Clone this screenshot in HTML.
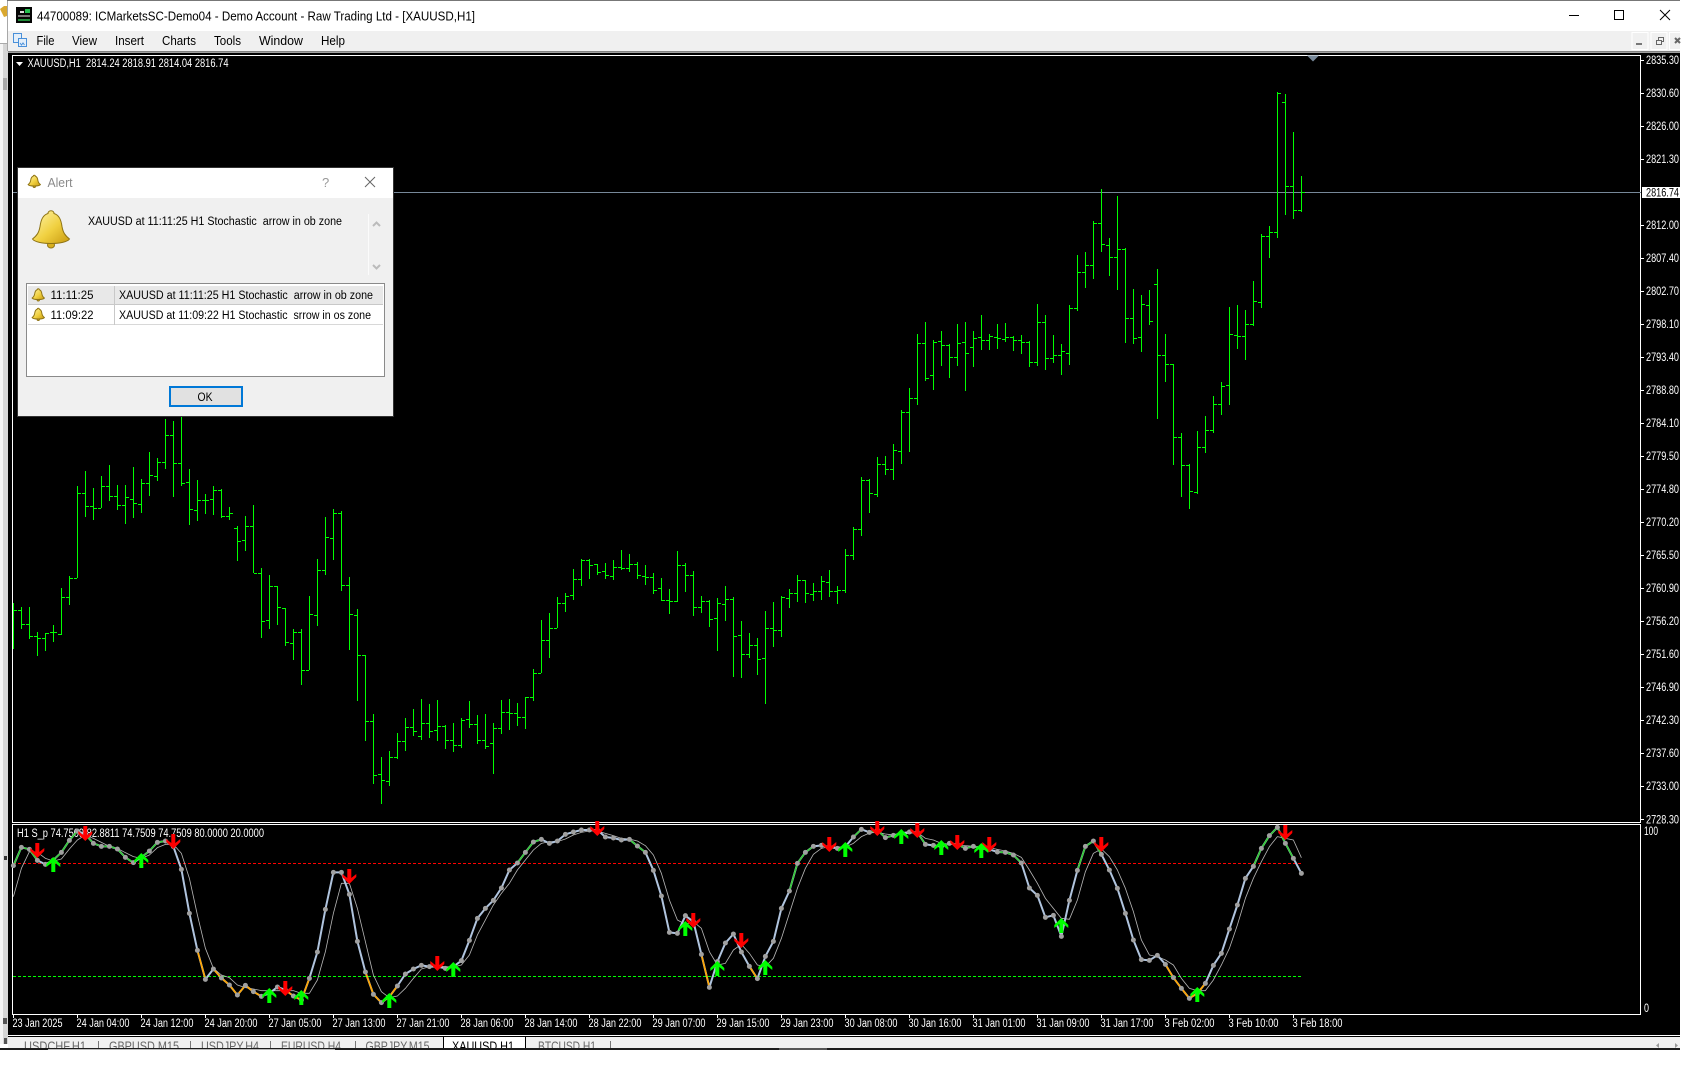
<!DOCTYPE html>
<html><head><meta charset="utf-8"><title>MT4</title>
<style>
html,body{margin:0;padding:0;background:#fff;width:1696px;height:1066px;overflow:hidden}
svg{display:block}
text{font-family:"Liberation Sans",sans-serif;white-space:pre}
.w{fill:#fff;font-size:11.5px}
.k{fill:#000;font-size:12.5px}
.t{fill:#666;font-size:12.5px}
.d{fill:#000;font-size:11.5px}
</style></head><body>
<svg xmlns="http://www.w3.org/2000/svg" width="1696" height="1066" viewBox="0 0 1696 1066">
<defs>
<linearGradient id="gb" x1="0" y1="0" x2="1" y2="1"><stop offset="0" stop-color="#fff6b0"/><stop offset=".55" stop-color="#f0d040"/><stop offset="1" stop-color="#c89a10"/></linearGradient>
<g id="bell"><ellipse cx="19" cy="35" rx="3.5" ry="3" fill="#d8b020" stroke="#8f7414"/><path d="M19 .7c2 0 3 1.3 3 2.8c5 1.5 7 6 8 13c1 6 3 9 7.5 12.5c-2 3-10 4.500-18.500 4.500s-16.500-1.500-18.500-4.500c4.500-3.500 6.500-6.500 7.500-12.500c1-7 3-11.500 8-13c0-1.500 1-2.800 3-2.800z" fill="url(#gb)" stroke="#8f7414"/></g>
<path id="ad" d="M0 0L-7-7V-10L-2-6V-15H2V-6L7-10V-7Z" fill="#f00"/>
<path id="au" d="M0 0L-7 7V10L-2 6V15H2V6L7 10V7Z" fill="#0f0"/>
<marker id="m" markerUnits="userSpaceOnUse" markerWidth="16" markerHeight="16" refX="8" refY="8"><circle cx="8" cy="8" r="7.500" fill="#a0a0a0"/></marker>
<polyline id="mainl" fill="none" points="0,122 24,67 48,73 72,106 96,118 120,105 144,82 168,46 192,18 216,28 240,55 264,64 288,64 312,72 336,97 360,113 384,97 408,78 432,52 456,48 480,65 504,133 528,265 552,376 576,463 600,432 624,459 648,480 672,510 696,481 720,500 744,514 768,505 792,486 816,495 840,513 864,525 888,460 912,381 936,253 960,142 984,142 1008,208 1032,349 1056,441 1080,508 1104,533 1128,515 1152,483 1176,447 1200,432 1224,421 1248,425 1272,425 1296,430 1320,425 1344,407 1368,346 1392,280 1416,250 1440,226 1464,189 1488,135 1512,114 1536,82 1560,51 1584,43 1608,55 1632,48 1656,28 1680,21 1704,15 1728,15 1752,15 1776,36 1800,39 1824,45 1848,43 1872,63 1896,82 1920,136 1944,213 1968,322 1992,325 2016,272 2040,290 2064,388 2088,487 2112,410 2136,354 2160,327 2184,381 2208,424 2232,461 2256,394 2280,349 2304,250 2328,198 2352,115 2376,82 2400,64 2424,61 2448,66 2472,70 2496,65 2520,36 2544,13 2568,22 2592,15 2616,38 2640,31 2664,25 2688,21 2712,22 2736,58 2760,61 2784,65 2808,55 2832,58 2856,70 2880,64 2904,70 2928,73 2952,81 2976,82 3000,90 3024,114 3048,189 3072,211 3096,277 3120,271 3144,334 3168,226 3192,136 3216,64 3240,48 3264,88 3288,135 3312,190 3336,265 3360,345 3384,404 3408,406 3432,391 3456,418 3480,458 3504,490 3528,520 3552,505 3576,475 3600,421 3624,385 3648,312 3672,240 3696,160 3720,124 3744,70 3768,32 3792,7 3816,55 3840,100 3864,145"/>
</defs>

<!-- window frame -->
<rect x="0" y="0" width="1696" height="1066" fill="#fff"/>
<rect x="7" y="0" width="1673" height="1" fill="#777"/>
<rect x="0" y="43" width="7" height="1" fill="#aaa"/>
<rect x="0" y="44" width="3" height="1000" fill="#f4f4f4"/>
<rect x="3" y="44" width="5" height="1000" fill="#d6d6d6"/>
<rect x="3" y="78" width="4" height="12" fill="#aaa"/>
<rect x="4" y="856" width="3" height="4" fill="#333"/>
<rect x="3" y="1018" width="4" height="6" fill="#555"/>
<rect x="4" y="1038" width="3" height="6" fill="#555"/>
<rect x="7" y="1" width="1" height="50" fill="#a8a8a8"/>
<rect x="8" y="31" width="1672" height="20" fill="#f0f0f0"/>
<rect x="8" y="51" width="1672" height="1" fill="#808080"/>
<rect x="8" y="52" width="1672" height="1" fill="#a0a0a0"/>
<path d="M0 9l4-3 3 0v10l-3 1z" fill="#d9a830"/>

<!-- logo + title -->
<rect x="16" y="7" width="16" height="16" fill="#050505"/>
<rect x="25" y="9" width="5" height="4" fill="#25c050"/>
<rect x="20" y="11" width="4" height="2" fill="#ddd"/>
<rect x="18" y="15" width="12" height="2" fill="#777"/>
<rect x="18" y="19" width="12" height="2" fill="#1f8a38"/>
<text class="k" x="37" y="20.500" textLength="438" lengthAdjust="spacingAndGlyphs">44700089: ICMarketsSC-Demo04 - Demo Account - Raw Trading Ltd - [XAUUSD,H1]</text>
<path d="M1569 15.500h10" stroke="#000" fill="none"/>
<rect x="1614.500" y="10.500" width="9" height="9" fill="none" stroke="#000"/>
<path d="M1660 10l10 10M1670 10l-10 10" stroke="#000" fill="none" stroke-width="1"/>

<!-- menu -->
<g fill="none" stroke="#4a90d9"><rect x="13.500" y="33.500" width="8" height="9" fill="#e4effa"/><rect x="18.500" y="38.500" width="8" height="8" fill="#e4effa"/><path d="M20 43l1.500 2 1.500-2 1.500 2"/></g>
<g class="menu">
<text class="k" x="36.500" y="45" textLength="18" lengthAdjust="spacingAndGlyphs">File</text>
<text class="k" x="72" y="45" textLength="25" lengthAdjust="spacingAndGlyphs">View</text>
<text class="k" x="115" y="45" textLength="29" lengthAdjust="spacingAndGlyphs">Insert</text>
<text class="k" x="162" y="45" textLength="34" lengthAdjust="spacingAndGlyphs">Charts</text>
<text class="k" x="214" y="45" textLength="27" lengthAdjust="spacingAndGlyphs">Tools</text>
<text class="k" x="259" y="45" textLength="44" lengthAdjust="spacingAndGlyphs">Window</text>
<text class="k" x="321" y="45" textLength="24" lengthAdjust="spacingAndGlyphs">Help</text>
</g>
<g fill="none" stroke="#fff"><rect x="1632" y="32.500" width="16" height="17"/><rect x="1651" y="32.500" width="16" height="17"/><rect x="1669.500" y="32.500" width="11" height="17"/></g>
<rect x="1636" y="43" width="6" height="2" fill="#777"/>
<path d="M1656.500 40.500h5v4h-5zM1658.500 40v-2.500h5v4h-2" fill="none" stroke="#666"/>
<path d="M1675 38l5 5M1680 38l-5 5" stroke="#666" stroke-width="2" fill="none"/>

<!-- chart background -->
<rect x="8" y="53" width="1672" height="982" fill="#000"/>
<rect x="12" y="55" width="1629" height="1" fill="#fff"/>
<rect x="12" y="55" width="1" height="768" fill="#fff"/>
<rect x="1640" y="55" width="1" height="768" fill="#fff"/>
<rect x="12" y="822" width="1629" height="1" fill="#fff"/>
<rect x="12" y="824" width="1629" height="1" fill="#fff"/>
<rect x="12" y="824" width="1" height="191" fill="#fff"/>
<rect x="1640" y="824" width="1" height="191" fill="#fff"/>
<rect x="12" y="1014" width="1629" height="1" fill="#fff"/>
<path d="M1307 55.500h12l-6 6z" fill="#778899"/>
<path d="M16 62h7l-3.500 4z" fill="#fff"/>
<text class="w" x="27.500" y="67" textLength="201" lengthAdjust="spacingAndGlyphs">XAUUSD,H1  2814.24 2818.91 2814.04 2816.74</text>

<!-- price line -->
<rect x="13" y="192" width="1628" height="1" fill="#778899"/>

<!-- price bars -->
<path fill="none" stroke="#0f0" stroke-width="1" shape-rendering="crispEdges" d="M13.500 603V649M14 610.500h3M21.500 607V629M18 610.500h3M22 624.500h3M29.500 607V639M26 624.500h3M30 636.500h3M37.500 632V656M34 636.500h3M38 638.500h3M45.500 633V651M42 638.500h3M46 633.500h3M53.500 625V642M50 632.500h3M54 632.500h3M61.500 588V635M58 634.500h3M62 597.500h3M69.500 576V605M66 597.500h3M70 578.500h3M77.500 486V578M74 578.500h3M78 493.500h3M85.500 471V517M82 493.500h3M86 506.500h3M93.500 488V520M90 506.500h3M94 508.500h3M101.500 476V508M98 508.500h3M102 486.500h3M109.500 465V501M106 486.500h3M110 496.500h3M117.500 485V510M114 496.500h3M118 505.500h3M125.500 485V524M122 505.500h3M126 497.500h3M133.500 467V518M130 499.500h3M134 503.500h3M141.500 479V513M138 504.500h3M142 483.500h3M149.500 452V496M146 483.500h3M150 475.500h3M157.500 458V481M154 476.500h3M158 462.500h3M165.500 419V469M162 462.500h3M166 435.500h3M173.500 421V497M170 435.500h3M174 463.500h3M181.500 416V486M178 463.500h3M182 483.500h3M189.500 469V525M186 482.500h3M190 509.500h3M197.500 480V521M194 510.500h3M198 500.500h3M205.500 494V514M202 500.500h3M206 500.500h3M213.500 486V515M210 499.500h3M214 490.500h3M221.500 489V518M218 490.500h3M222 516.500h3M229.500 507V520M226 516.500h3M230 513.500h3M237.500 526V561M234 528.500h3M238 541.500h3M245.500 516V551M242 540.500h3M246 526.500h3M253.500 505V573M250 526.500h3M254 573.500h3M261.500 568V638M258 573.500h3M262 621.500h3M269.500 575V629M266 620.500h3M270 586.500h3M277.500 586V625M274 586.500h3M278 607.500h3M285.500 608V646M282 608.500h3M286 642.500h3M293.500 629V660M290 643.500h3M294 632.500h3M301.500 629V685M298 632.500h3M302 670.500h3M309.500 596V670M306 670.500h3M310 614.500h3M317.500 559V626M314 615.500h3M318 570.500h3M325.500 517V575M322 570.500h3M326 537.500h3M333.500 509V560M330 538.500h3M334 513.500h3M341.500 511V591M338 513.500h3M342 585.500h3M349.500 577V650M346 585.500h3M350 614.500h3M357.500 609V701M354 615.500h3M358 655.500h3M365.500 655V741M362 655.500h3M366 721.500h3M373.500 714V784M370 721.500h3M374 775.500h3M381.500 757V804M378 774.500h3M382 780.500h3M389.500 751V786M386 781.500h3M390 757.500h3M397.500 733V759M394 757.500h3M398 741.500h3M405.500 718V751M402 741.500h3M406 727.500h3M413.500 709V736M410 727.500h3M414 731.500h3M421.500 699V740M418 736.500h3M422 723.500h3M429.500 704V738M426 723.500h3M430 731.500h3M437.500 700V741M434 730.500h3M438 726.500h3M445.500 725V749M442 726.500h3M446 740.500h3M453.500 723V752M450 740.500h3M454 745.500h3M461.500 718V748M458 745.500h3M462 720.500h3M469.500 701V728M466 719.500h3M470 724.500h3M477.500 715V744M474 724.500h3M478 740.500h3M485.500 714V749M482 740.500h3M486 746.500h3M493.500 723V774M490 743.500h3M494 728.500h3M501.500 700V734M498 728.500h3M502 712.500h3M509.500 699V730M506 712.500h3M510 713.500h3M517.500 703V726M514 713.500h3M518 717.500h3M525.500 697V729M522 717.500h3M526 697.500h3M533.500 669V701M530 697.500h3M534 673.500h3M541.500 620V673M538 673.500h3M542 640.500h3M549.500 613V658M546 640.500h3M550 628.500h3M557.500 597V628M554 628.500h3M558 603.500h3M565.500 593V612M562 603.500h3M566 596.500h3M573.500 569V600M570 595.500h3M574 579.500h3M581.500 559V586M578 579.500h3M582 560.500h3M589.500 559V579M586 560.500h3M590 565.500h3M597.500 564V575M594 564.500h3M598 572.500h3M605.500 563V579M602 571.500h3M606 575.500h3M613.500 560V580M610 576.500h3M614 567.500h3M621.500 550V570M618 567.500h3M622 568.500h3M629.500 554V572M626 568.500h3M630 564.500h3M637.500 562V579M634 564.500h3M638 575.500h3M645.500 565V585M642 576.500h3M646 577.500h3M653.500 573V594M650 577.500h3M654 590.500h3M661.500 578V601M658 588.500h3M662 600.500h3M669.500 589V614M666 600.500h3M670 601.500h3M677.500 551V602M674 601.500h3M678 565.500h3M685.500 563V592M682 565.500h3M686 575.500h3M693.500 571V616M690 575.500h3M694 607.500h3M701.500 596V613M698 607.500h3M702 601.500h3M709.500 600V627M706 601.500h3M710 619.500h3M717.500 598V651M714 618.500h3M718 603.500h3M725.500 586V621M722 604.500h3M726 599.500h3M733.500 597V677M730 599.500h3M734 636.500h3M741.500 621V678M738 635.500h3M742 654.500h3M749.500 633V658M746 654.500h3M750 645.500h3M757.500 638V675M754 645.500h3M758 659.500h3M765.500 611V704M762 658.500h3M766 628.500h3M773.500 602V647M770 628.500h3M774 630.500h3M781.500 596V637M778 630.500h3M782 597.500h3M789.500 589V608M786 598.500h3M790 593.500h3M797.500 575V602M794 593.500h3M798 580.500h3M805.500 580V603M802 580.500h3M806 593.500h3M813.500 583V601M810 594.500h3M814 591.500h3M821.500 576V600M818 591.500h3M822 581.500h3M829.500 570V597M826 582.500h3M830 591.500h3M837.500 586V604M834 591.500h3M838 590.500h3M845.500 549V593M842 590.500h3M846 555.500h3M853.500 527V560M850 555.500h3M854 529.500h3M861.500 477V536M858 529.500h3M862 480.500h3M869.500 479V513M866 480.500h3M870 493.500h3M877.500 457V497M874 494.500h3M878 464.500h3M885.500 456V475M882 464.500h3M886 469.500h3M893.500 444V480M890 469.500h3M894 450.500h3M901.500 410V464M898 451.500h3M902 412.500h3M909.500 388V452M906 412.500h3M910 398.500h3M917.500 334V405M914 398.500h3M918 343.500h3M925.500 322V381M922 343.500h3M926 378.500h3M933.500 340V390M930 375.500h3M934 342.500h3M941.500 331V366M938 341.500h3M942 345.500h3M949.500 344V378M946 345.500h3M950 357.500h3M957.500 324V366M954 357.500h3M958 343.500h3M965.500 322V391M962 342.500h3M966 353.500h3M973.500 331V367M970 347.500h3M974 338.500h3M981.500 315V350M978 337.500h3M982 340.500h3M989.500 334V350M986 340.500h3M990 336.500h3M997.500 324V349M994 337.500h3M998 338.500h3M1005.500 323V342M1002 339.500h3M1006 337.500h3M1013.500 336V351M1010 337.500h3M1014 340.500h3M1021.500 335V354M1018 340.500h3M1022 342.500h3M1029.500 341V367M1026 342.500h3M1030 362.500h3M1037.500 304V366M1034 362.500h3M1038 322.500h3M1045.500 315V370M1042 322.500h3M1046 358.500h3M1053.500 335V363M1050 358.500h3M1054 355.500h3M1061.500 344V375M1058 355.500h3M1062 351.500h3M1069.500 305V365M1066 353.500h3M1070 308.500h3M1077.500 255V311M1074 308.500h3M1078 272.500h3M1085.500 252V288M1082 272.500h3M1086 265.500h3M1093.500 221V279M1090 265.500h3M1094 223.500h3M1101.500 189V252M1098 223.500h3M1102 244.500h3M1109.500 238V276M1106 245.500h3M1110 257.500h3M1117.500 196V290M1114 257.500h3M1118 249.500h3M1125.500 248V343M1122 249.500h3M1126 318.500h3M1133.500 289V344M1130 318.500h3M1134 338.500h3M1141.500 295V352M1138 337.500h3M1142 304.500h3M1149.500 290V325M1146 305.500h3M1150 321.500h3M1157.500 269V419M1154 284.500h3M1158 355.500h3M1165.500 334V382M1162 355.500h3M1166 364.500h3M1173.500 364V465M1170 364.500h3M1174 437.500h3M1181.500 433V497M1178 437.500h3M1182 465.500h3M1189.500 464V509M1186 465.500h3M1190 491.500h3M1197.500 431V494M1194 492.500h3M1198 447.500h3M1205.500 416V453M1202 447.500h3M1206 430.500h3M1213.500 396V433M1210 430.500h3M1214 404.500h3M1221.500 382V415M1218 404.500h3M1222 386.500h3M1229.500 307V405M1226 385.500h3M1230 334.500h3M1237.500 305V349M1234 335.500h3M1238 336.500h3M1245.500 310V360M1242 336.500h3M1246 324.500h3M1253.500 281V326M1250 324.500h3M1254 301.500h3M1261.500 234V308M1258 302.500h3M1262 236.500h3M1269.500 226V258M1266 236.500h3M1270 232.500h3M1277.500 92V238M1274 232.500h3M1278 93.500h3M1285.500 94V215M1282 102.500h3M1286 186.500h3M1293.500 132V219M1290 186.500h3M1294 210.500h3M1301.500 176V212M1298 210.500h3M1302 192.500h3"/>

<!-- price axis -->
<path d="M1641 60.500h3M1641 93.500h3M1641 126.500h3M1641 159.500h3M1641 225.500h3M1641 258.500h3M1641 291.500h3M1641 324.500h3M1641 357.500h3M1641 390.500h3M1641 423.500h3M1641 456.500h3M1641 489.500h3M1641 522.500h3M1641 555.500h3M1641 588.500h3M1641 621.500h3M1641 654.500h3M1641 687.500h3M1641 720.500h3M1641 753.500h3M1641 786.500h3M1641 819.500h3" stroke="#fff" fill="none"/>
<g>
<text class="w" x="1646" y="64" textLength="33" lengthAdjust="spacingAndGlyphs">2835.30</text>
<text class="w" x="1646" y="97" textLength="33" lengthAdjust="spacingAndGlyphs">2830.60</text>
<text class="w" x="1646" y="130" textLength="33" lengthAdjust="spacingAndGlyphs">2826.00</text>
<text class="w" x="1646" y="163" textLength="33" lengthAdjust="spacingAndGlyphs">2821.30</text>
<rect x="1642" y="187" width="38" height="11" fill="#fff"/>
<text x="1646" y="196.500" font-size="11.500" fill="#000" textLength="33" lengthAdjust="spacingAndGlyphs">2816.74</text>
<text class="w" x="1646" y="229" textLength="33" lengthAdjust="spacingAndGlyphs">2812.00</text>
<text class="w" x="1646" y="262" textLength="33" lengthAdjust="spacingAndGlyphs">2807.40</text>
<text class="w" x="1646" y="295" textLength="33" lengthAdjust="spacingAndGlyphs">2802.70</text>
<text class="w" x="1646" y="328" textLength="33" lengthAdjust="spacingAndGlyphs">2798.10</text>
<text class="w" x="1646" y="361" textLength="33" lengthAdjust="spacingAndGlyphs">2793.40</text>
<text class="w" x="1646" y="394" textLength="33" lengthAdjust="spacingAndGlyphs">2788.80</text>
<text class="w" x="1646" y="427" textLength="33" lengthAdjust="spacingAndGlyphs">2784.10</text>
<text class="w" x="1646" y="460" textLength="33" lengthAdjust="spacingAndGlyphs">2779.50</text>
<text class="w" x="1646" y="493" textLength="33" lengthAdjust="spacingAndGlyphs">2774.80</text>
<text class="w" x="1646" y="526" textLength="33" lengthAdjust="spacingAndGlyphs">2770.20</text>
<text class="w" x="1646" y="559" textLength="33" lengthAdjust="spacingAndGlyphs">2765.50</text>
<text class="w" x="1646" y="592" textLength="33" lengthAdjust="spacingAndGlyphs">2760.90</text>
<text class="w" x="1646" y="625" textLength="33" lengthAdjust="spacingAndGlyphs">2756.20</text>
<text class="w" x="1646" y="658" textLength="33" lengthAdjust="spacingAndGlyphs">2751.60</text>
<text class="w" x="1646" y="691" textLength="33" lengthAdjust="spacingAndGlyphs">2746.90</text>
<text class="w" x="1646" y="724" textLength="33" lengthAdjust="spacingAndGlyphs">2742.30</text>
<text class="w" x="1646" y="757" textLength="33" lengthAdjust="spacingAndGlyphs">2737.60</text>
<text class="w" x="1646" y="790" textLength="33" lengthAdjust="spacingAndGlyphs">2733.00</text>
<text class="w" x="1646" y="823.500" textLength="33" lengthAdjust="spacingAndGlyphs">2728.30</text>
<text class="w" x="1644" y="835" textLength="14" lengthAdjust="spacingAndGlyphs">100</text>
<text class="w" x="1644" y="1012" textLength="5" lengthAdjust="spacingAndGlyphs">0</text>
</g>

<!-- indicator -->
<text class="w" x="17" y="837" textLength="247" lengthAdjust="spacingAndGlyphs">H1 S_p 74.7509 82.8811 74.7509 74.7509 80.0000 20.0000</text>
<path d="M13 863.500H1301" stroke="#f00" stroke-dasharray="3 2" fill="none"/>
<path d="M13 976.500H1301" stroke="#0f0" stroke-dasharray="3 2" fill="none"/>
<g transform="translate(13.400,825) scale(.33333)" fill="none" stroke-linejoin="round">
<polyline stroke="#b8b8b8" stroke-width="2.400" points="0,215 24,130 48,80 72,82 96,100 120,108 144,102 168,72 192,45 216,30 240,40 264,52 288,64 312,70 336,83 360,95 384,100 408,90 432,68 456,58 480,58 504,85 528,160 552,270 576,370 600,430 624,450 648,458 672,480 696,488 720,492 744,497 768,497 792,497 816,497 840,497 864,505 888,505 912,465 936,380 960,265 984,175 1008,175 1032,250 1056,350 1080,450 1104,500 1128,518 1152,513 1176,490 1200,460 1224,432 1248,425 1272,423 1296,425 1320,426 1344,420 1368,390 1392,330 1416,285 1440,240 1464,205 1488,175 1512,135 1536,105 1560,75 1584,55 1608,50 1632,50 1656,42 1680,30 1704,22 1728,18 1752,18 1776,25 1800,32 1824,40 1848,42 1872,48 1896,62 1920,90 1944,145 1968,225 1992,285 2016,298 2040,290 2064,310 2088,380 2112,420 2136,415 2160,375 2184,358 2208,385 2232,420 2256,425 2280,400 2304,340 2328,265 2352,190 2376,130 2400,88 2424,70 2448,65 2472,66 2496,66 2520,55 2544,35 2568,24 2592,22 2616,27 2640,30 2664,28 2688,25 2712,22 2736,40 2760,45 2784,55 2808,58 2832,58 2856,62 2880,64 2904,66 2928,68 2952,73 2976,78 3000,85 3024,97 3048,135 3072,175 3096,220 3120,250 3144,280 3168,283 3192,225 3216,140 3240,85 3264,72 3288,95 3312,135 3336,190 3360,260 3384,345 3408,390 3432,395 3456,405 3480,420 3504,460 3528,490 3552,497 3576,497 3600,465 3624,420 3648,370 3672,300 3696,220 3720,160 3744,110 3768,65 3792,35 3816,40 3840,45 3864,98"/>
<use href="#mainl" stroke="#b0c4de" stroke-width="6"/>
<g stroke="#32cd32" stroke-width="4.500">
<polyline points="0,122 24,67 48,73 72,106"/>
<polyline points="120,105 144,82 168,46 192,18"/>
<polyline points="216,28 240,55 264,64 288,64 312,72 336,97 360,113"/>
<polyline points="384,97 408,78 432,52 456,48 480,65"/>
<polyline points="1512,114 1536,82 1560,51 1584,43"/>
<polyline points="1848,43 1872,63 1896,82"/>
<polyline points="2328,198 2352,115 2376,82 2400,64"/>
<polyline points="2520,36 2544,13"/>
<polyline points="2568,22 2592,15 2616,38 2640,31"/>
<polyline points="2712,22 2736,58"/>
<polyline points="2784,65 2808,55 2832,58 2856,70 2880,64 2904,70"/>
<polyline points="2952,81 2976,82 3000,90 3024,114"/>
<polyline points="3192,136 3216,64 3240,48 3264,88"/>
<polyline points="3720,124 3744,70 3768,32 3792,7 3816,55 3840,100"/>
</g>
<g stroke="#ffa500" stroke-width="5">
<polyline points="552,376 576,463"/>
<polyline points="600,432 624,459 648,480 672,510 696,481 720,500 744,514"/>
<polyline points="816,495 840,513 864,525 888,460"/>
<polyline points="1056,441 1080,508 1104,533 1128,515 1152,483"/>
<polyline points="2064,388 2088,487"/>
<polyline points="2208,424 2232,461"/>
<polyline points="3456,418 3480,458 3504,490 3528,520 3552,505 3576,475"/>
</g>
<use href="#mainl" stroke="none" style="marker-start:url(#m);marker-mid:url(#m);marker-end:url(#m)"/>
</g>
<!-- arrows -->
<use href="#ad" x="37.300" y="858"/><use href="#ad" x="85.300" y="841"/><use href="#ad" x="173.300" y="849"/><use href="#ad" x="349.300" y="884"/><use href="#ad" x="285.300" y="996"/><use href="#ad" x="437.300" y="971"/><use href="#ad" x="597.300" y="836"/><use href="#ad" x="693.300" y="928"/><use href="#ad" x="741.300" y="948"/><use href="#ad" x="829.300" y="852"/><use href="#ad" x="877.300" y="836"/><use href="#ad" x="917.300" y="838"/><use href="#ad" x="957.300" y="850"/><use href="#ad" x="989.300" y="852"/><use href="#ad" x="1101.300" y="852"/><use href="#ad" x="1285.300" y="840"/>
<use href="#au" x="53.300" y="857"/><use href="#au" x="141.300" y="853"/><use href="#au" x="269.300" y="988"/><use href="#au" x="301.300" y="990"/><use href="#au" x="389.300" y="993"/><use href="#au" x="453.300" y="962"/><use href="#au" x="685.300" y="921"/><use href="#au" x="717.300" y="961"/><use href="#au" x="765.300" y="960"/><use href="#au" x="845.300" y="842"/><use href="#au" x="901.300" y="829"/><use href="#au" x="941.300" y="840"/><use href="#au" x="981.300" y="843"/><use href="#au" x="1061.300" y="918"/><use href="#au" x="1197.300" y="987"/>

<!-- time axis -->
<path d="M13.500 1015v3M77.500 1015v3M141.500 1015v3M205.500 1015v3M269.500 1015v3M333.500 1015v3M397.500 1015v3M461.500 1015v3M525.500 1015v3M589.500 1015v3M653.500 1015v3M717.500 1015v3M781.500 1015v3M845.500 1015v3M909.500 1015v3M973.500 1015v3M1037.500 1015v3M1101.500 1015v3M1165.500 1015v3M1229.500 1015v3M1293.500 1015v3" stroke="#fff" fill="none"/>
<text class="w" x="12.500" y="1027" textLength="50" lengthAdjust="spacingAndGlyphs">23 Jan 2025</text>
<text class="w" x="76.500" y="1027" textLength="53" lengthAdjust="spacingAndGlyphs">24 Jan 04:00</text>
<text class="w" x="140.500" y="1027" textLength="53" lengthAdjust="spacingAndGlyphs">24 Jan 12:00</text>
<text class="w" x="204.500" y="1027" textLength="53" lengthAdjust="spacingAndGlyphs">24 Jan 20:00</text>
<text class="w" x="268.500" y="1027" textLength="53" lengthAdjust="spacingAndGlyphs">27 Jan 05:00</text>
<text class="w" x="332.500" y="1027" textLength="53" lengthAdjust="spacingAndGlyphs">27 Jan 13:00</text>
<text class="w" x="396.500" y="1027" textLength="53" lengthAdjust="spacingAndGlyphs">27 Jan 21:00</text>
<text class="w" x="460.500" y="1027" textLength="53" lengthAdjust="spacingAndGlyphs">28 Jan 06:00</text>
<text class="w" x="524.500" y="1027" textLength="53" lengthAdjust="spacingAndGlyphs">28 Jan 14:00</text>
<text class="w" x="588.500" y="1027" textLength="53" lengthAdjust="spacingAndGlyphs">28 Jan 22:00</text>
<text class="w" x="652.500" y="1027" textLength="53" lengthAdjust="spacingAndGlyphs">29 Jan 07:00</text>
<text class="w" x="716.500" y="1027" textLength="53" lengthAdjust="spacingAndGlyphs">29 Jan 15:00</text>
<text class="w" x="780.500" y="1027" textLength="53" lengthAdjust="spacingAndGlyphs">29 Jan 23:00</text>
<text class="w" x="844.500" y="1027" textLength="53" lengthAdjust="spacingAndGlyphs">30 Jan 08:00</text>
<text class="w" x="908.500" y="1027" textLength="53" lengthAdjust="spacingAndGlyphs">30 Jan 16:00</text>
<text class="w" x="972.500" y="1027" textLength="53" lengthAdjust="spacingAndGlyphs">31 Jan 01:00</text>
<text class="w" x="1036.500" y="1027" textLength="53" lengthAdjust="spacingAndGlyphs">31 Jan 09:00</text>
<text class="w" x="1100.500" y="1027" textLength="53" lengthAdjust="spacingAndGlyphs">31 Jan 17:00</text>
<text class="w" x="1164.500" y="1027" textLength="50" lengthAdjust="spacingAndGlyphs">3 Feb 02:00</text>
<text class="w" x="1228.500" y="1027" textLength="50" lengthAdjust="spacingAndGlyphs">3 Feb 10:00</text>
<text class="w" x="1292.500" y="1027" textLength="50" lengthAdjust="spacingAndGlyphs">3 Feb 18:00</text>

<!-- tab strip -->
<rect x="8" y="1035" width="1672" height="1" fill="#fff"/>
<rect x="8" y="1037" width="1672" height="11" fill="#f0f0f0"/>
<rect x="8" y="1036" width="1672" height="1" fill="#000"/>
<rect x="443" y="1037" width="83" height="11" fill="#fff"/>
<path d="M443.500 1037v11M525.500 1037v11" stroke="#000" fill="none"/>
<path d="M98.500 1041v7M190.500 1041v7M270.500 1041v7M355.500 1041v7M610.500 1041v7" stroke="#777" fill="none"/>
<text class="t" x="24" y="1050.500" textLength="62" lengthAdjust="spacingAndGlyphs">USDCHF,H1</text>
<text class="t" x="109" y="1050.500" textLength="70" lengthAdjust="spacingAndGlyphs">GBPUSD,M15</text>
<text class="t" x="201" y="1050.500" textLength="58" lengthAdjust="spacingAndGlyphs">USDJPY,H4</text>
<text class="t" x="281" y="1050.500" textLength="60" lengthAdjust="spacingAndGlyphs">EURUSD,H4</text>
<text class="t" x="365.500" y="1050.500" textLength="64" lengthAdjust="spacingAndGlyphs">GBPJPY,M15</text>
<text x="452" y="1050.500" font-size="12.500" fill="#000" textLength="62" lengthAdjust="spacingAndGlyphs">XAUUSD,H1</text>
<text class="t" x="538" y="1050.500" textLength="58" lengthAdjust="spacingAndGlyphs">BTCUSD,H1</text>
<path d="M1659 1043v5l-3-2.500zM1675 1043v5l3-2.500z" fill="#999"/>
<rect x="0" y="1048" width="1680" height="2" fill="#1c1c1c"/>
<rect x="48" y="1049" width="287" height="1" fill="#bbb"/>
<rect x="779" y="1048" width="48" height="2" fill="#555"/>
<rect x="0" y="1050" width="1696" height="16" fill="#fff"/>

<!-- alert dialog -->
<rect x="17.500" y="167.500" width="376" height="249" fill="#f0f0f0" stroke="#333"/>
<rect x="18" y="168" width="375" height="30" fill="#fff"/>
<use href="#bell" stroke-width="3" transform="translate(28,175) scale(.33)"/>
<text x="47.500" y="187" font-size="12.500" fill="#8a8a8a" textLength="25" lengthAdjust="spacingAndGlyphs">Alert</text>
<text x="322" y="187" font-size="13" fill="#999">?</text>
<path d="M365 177l10 10M375 177l-10 10" stroke="#666" fill="none"/>
<use href="#bell" stroke-width="1" transform="translate(32,210)"/>
<text class="d" x="88" y="225" textLength="254" lengthAdjust="spacingAndGlyphs">XAUUSD at 11:11:25 H1 Stochastic  arrow in ob zone</text>
<rect x="368" y="214" width="1" height="61" fill="#fbfbfb"/>
<path d="M373 226l3.500-3.500 3.500 3.500M373 265l3.500 3.500 3.500-3.500" stroke="#bbb" stroke-width="2" fill="none"/>
<rect x="26.500" y="283.500" width="358" height="93" fill="#fff" stroke="#8a8a8a" stroke-width="1"/>
<rect x="28" y="286" width="355" height="18" fill="#e8e8e8"/>
<rect x="28" y="304" width="355" height="1" fill="#c8c8c8"/>
<rect x="28" y="324" width="355" height="1" fill="#d8d8d8"/>
<rect x="114" y="286" width="1" height="39" fill="#c8c8c8"/>
<use href="#bell" stroke-width="3" transform="translate(32,288.500) scale(.33)"/>
<use href="#bell" stroke-width="3" transform="translate(32,308) scale(.33)"/>
<text class="d" x="50.500" y="299" textLength="43" lengthAdjust="spacingAndGlyphs">11:11:25</text>
<text class="d" x="50.500" y="319" textLength="43" lengthAdjust="spacingAndGlyphs">11:09:22</text>
<text class="d" x="119" y="299" textLength="254" lengthAdjust="spacingAndGlyphs">XAUUSD at 11:11:25 H1 Stochastic  arrow in ob zone</text>
<text class="d" x="119" y="319" textLength="252" lengthAdjust="spacingAndGlyphs">XAUUSD at 11:09:22 H1 Stochastic  srrow in os zone</text>
<rect x="170" y="387" width="72" height="19" fill="#e1e1e1" stroke="#0078d7" stroke-width="2"/>
<text x="197.500" y="401" font-size="11.500" fill="#000" textLength="15" lengthAdjust="spacingAndGlyphs">OK</text>
</svg>
</body></html>
